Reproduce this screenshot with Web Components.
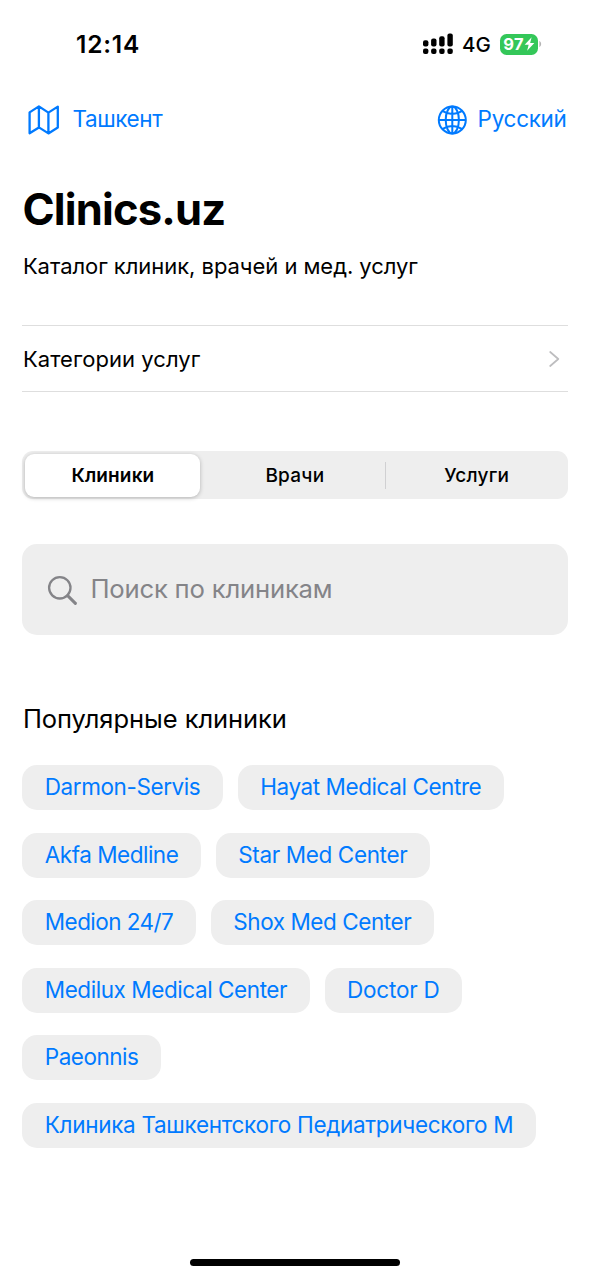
<!DOCTYPE html>
<html lang="ru">
<head>
<meta charset="utf-8">
<meta name="viewport" content="width=device-width, initial-scale=1">
<title>Clinics.uz</title>
<style>
html, body { margin: 0; padding: 0; background: #fff; }
body { font-family: Inter, "Noto Sans", sans-serif; color: #000; --blue: #007aff; --fill: #eeeeee; }
</style>
</head>
<body>
<clinics-app></clinics-app>
<script>
const define = (name, html, ready) => {
  const template = document.createElement('template');
  template.innerHTML = html;
  customElements.define(name, class extends HTMLElement {
    connectedCallback() {
      if (this.shadowRoot) return;
      this.attachShadow({ mode: 'open' }).append(template.content.cloneNode(true));
      if (ready) ready(this);
    }
  });
};

/* One line of text, tracked so that its advance equals the "fit" attribute. */
define('fit-text', `<style>
:host { display: block; white-space: nowrap; flex: none; }
span { display: inline-block; vertical-align: top; }
</style><span><slot></slot></span>`, el => {
  const span = el.shadowRoot.querySelector('span');
  const target = parseFloat(el.getAttribute('fit'));
  const count = [...el.textContent].length;
  const gap = (target - span.getBoundingClientRect().width) / count;
  span.style.letterSpacing = gap.toFixed(4) + 'px';
  el.style.width = target + 'px';
});

define('status-bar', `<style>
:host { display: flex; justify-content: space-between; align-items: center; height: 88px; padding: 0 48px 0 76px; box-sizing: border-box; }
.time { font-size: 24.5px; font-weight: 600; }
.right { display: flex; align-items: center; }
.net { font-size: 20.5px; font-weight: 500; margin: 0 9px 0 8px; }
.battery { display: flex; align-items: center; justify-content: center; gap: 0; width: 38px; height: 21px; border-radius: 6.5px; background: #34c759; color: #fff; }
.battery fit-text { font-size: 16.5px; font-weight: 700; line-height: 21px; }
.cap { margin-left: 1px; }
svg { display: block; flex: none; }
</style>
<fit-text class="time" fit="64">12:14</fit-text>
<div class="right">
<svg width="31" height="22" viewBox="0 0 31 22"><rect x="0" y="7.2" width="5.4" height="6.2" rx="2"/><rect x="8.1" y="5.4" width="5.4" height="8" rx="2"/><rect x="16.2" y="3.2" width="5.4" height="10.2" rx="2"/><rect x="24.4" y=".4" width="5.4" height="13" rx="2"/><rect x="0" y="15.6" width="5.4" height="5.3" rx="2"/><rect x="8.1" y="15.6" width="5.4" height="5.3" rx="2"/><rect x="16.2" y="15.6" width="5.4" height="5.3" rx="2"/><rect x="24.4" y="15.6" width="5.4" height="5.3" rx="2"/></svg>
<fit-text class="net" fit="29">4G</fit-text>
<div class="battery"><fit-text fit="20.5">97</fit-text><svg width="11" height="14" viewBox="0 0 10 13"><path d="M7 .3.5 7.3h3.7L2.8 12.7 9.5 5.6H5.6Z" fill="#fff"/></svg></div>
<svg class="cap" width="3" height="8" viewBox="0 0 3 8"><path d="M.4.8Q2.2 2 2.2 4T.4 7.2Z" fill="#b4b4b4"/></svg>
</div>`);

define('top-link', `<style>
:host { display: flex; align-items: center; color: var(--blue); font-size: 22.5px; line-height: 32px; }
</style><slot></slot>`);

define('map-icon', `<style>:host { display: block; width: 32px; height: 32px; margin: 2px 12px 0 1px; } svg { display: block; }</style>
<svg width="32" height="32" viewBox="0 0 32 32" fill="none" stroke="#007aff" stroke-width="2.3" stroke-linejoin="round"><path d="M1.6 8.4 10.9 2.4 20.4 8.6 29.8 2.6V23.6L20.4 29.4 10.9 23.4 1.6 29.2ZM10.9 2.4v21M20.4 8.6v20.8"/></svg>`);

define('globe-icon', `<style>:host { display: block; width: 32px; height: 32px; margin: 2px 10px 0 0; } svg { display: block; }</style>
<svg width="32" height="32" viewBox="0 0 32 32" fill="none" stroke="#007aff" stroke-width="2"><circle cx="16.3" cy="16" r="13.5"/><ellipse cx="16.3" cy="16" rx="6.6" ry="13.5"/><path d="M16.3 2.4v27.2M2.7 16h27.2M6.3 6.8Q16.3 13.2 26.3 6.8M6.3 25.2Q16.3 18.8 26.3 25.2"/></svg>`);

define('page-heading', `<style>
:host { display: block; }
.title { font-size: 43.5px; font-weight: 700; line-height: 56px; }
.sub { font-size: 22px; line-height: 32px; margin: 13px 0 0 .5px; }
</style>
<fit-text class="title" fit="203">Clinics.uz</fit-text>
<fit-text class="sub" fit="395">Каталог клиник, врачей и мед. услуг</fit-text>`);

define('list-row', `<style>
:host { display: flex; align-items: center; justify-content: space-between; height: 67px; box-sizing: border-box; border: solid #dedede; border-width: 1px 0; padding: 0 8px 0 .5px; font-size: 22px; line-height: 32px; }
svg { display: block; }
</style><slot></slot>
<svg width="11" height="16" viewBox="0 0 11 16" fill="none" stroke="#bdbdbf" stroke-width="1.7" stroke-linecap="round" stroke-linejoin="round"><path d="M1.2 1 9.3 8 1.2 15"/></svg>`);

define('segment-control', `<style>
:host { display: grid; grid-template-columns: 178px 184px 1fr; height: 48px; box-sizing: border-box; padding: 3px 0 2px; border-radius: 11px; background: var(--fill); font-size: 19px; font-weight: 500; line-height: 43px; }
div { display: flex; justify-content: center; align-items: center; box-sizing: border-box; }
fit-text { padding-top: 1px; line-height: 42px; }
.on { margin-left: 3px; border-radius: 9px; background: #fff; box-shadow: 0 1px 4px rgba(0,0,0,.25); font-weight: 600; }
.mid { padding-left: 5px; }
.rule { width: 1px; height: 27px; margin-left: .6px; background: #d0d0d2; flex: none; }
.grow { flex: 1; }
</style>
<div class="on"><fit-text fit="83">Клиники</fit-text></div>
<div class="mid"><div class="grow"><fit-text fit="59">Врачи</fit-text></div></div>
<div class="last"><span class="rule"></span><div class="grow"><fit-text fit="65">Услуги</fit-text></div></div>`);

define('search-field', `<style>
:host { display: flex; align-items: center; height: 90.5px; box-sizing: border-box; padding-left: 25px; gap: 12px; border-radius: 15px; background: var(--fill); color: #848488; font-size: 25.7px; line-height: 36px; }
svg { display: block; margin-top: 3px; }
</style>
<svg width="31" height="31" viewBox="0 0 31 31" fill="none" stroke="#848488" stroke-linecap="round"><circle cx="12.8" cy="12.8" r="10.7" stroke-width="2.3"/><path d="m20.6 20.6 7.8 7.8" stroke-width="3"/></svg><slot></slot>`);

define('clinic-chip', `<style>
:host { display: block; height: 45px; box-sizing: border-box; padding: 0 22.6px 0 22.4px; border-radius: 15px; background: var(--fill); color: var(--blue); font-size: 22.5px; line-height: 43px; }
</style><slot></slot>`);

define('chip-list', `<style>
:host { display: flex; flex-wrap: wrap; gap: 22.5px 15px; }
</style><slot></slot>`);

define('home-indicator', `<style>
:host { display: block; width: 210px; height: 7.5px; margin: auto auto 12px; border-radius: 4px; background: #000; }
</style>`);

define('clinics-app', `<style>
:host { display: flex; flex-direction: column; width: 590px; height: 1278px; overflow: hidden; background: #fff; }
main { display: block; padding: 15px 22.4px 0; }
nav { display: flex; justify-content: space-between; height: 32px; padding: 0 1px 0 5px; }
top-link { height: 32px; }
page-heading { margin-top: 46px; }
list-row { margin-top: 43px; }
segment-control { margin-top: 59px; }
search-field { margin-top: 45px; }
.popular { font-size: 25.5px; line-height: 36px; margin: 66.5px 0 0 .5px; }
chip-list { margin-top: 28.3px; }
</style>
<status-bar></status-bar>
<main>
<nav>
<top-link><map-icon></map-icon><fit-text fit="90">Ташкент</fit-text></top-link>
<top-link><globe-icon></globe-icon><fit-text fit="89">Русский</fit-text></top-link>
</nav>
<page-heading></page-heading>
<list-row><fit-text fit="177.5">Категории услуг</fit-text></list-row>
<segment-control></segment-control>
<search-field><fit-text fit="242">Поиск по клиникам</fit-text></search-field>
<fit-text class="popular" fit="264">Популярные клиники</fit-text>
<chip-list>
<clinic-chip><fit-text fit="155.5">Darmon-Servis</fit-text></clinic-chip>
<clinic-chip><fit-text fit="221">Hayat Medical Centre</fit-text></clinic-chip>
<clinic-chip><fit-text fit="133.5">Akfa Medline</fit-text></clinic-chip>
<clinic-chip><fit-text fit="169">Star Med Center</fit-text></clinic-chip>
<clinic-chip><fit-text fit="128.5">Medion 24/7</fit-text></clinic-chip>
<clinic-chip><fit-text fit="178">Shox Med Center</fit-text></clinic-chip>
<clinic-chip><fit-text fit="242.3">Medilux Medical Center</fit-text></clinic-chip>
<clinic-chip><fit-text fit="92.5">Doctor D</fit-text></clinic-chip>
<clinic-chip><fit-text fit="93.5">Paeonnis</fit-text></clinic-chip>
<clinic-chip><fit-text fit="468.5">Клиника Ташкентского Педиатрического М</fit-text></clinic-chip>
</chip-list>
</main>
<home-indicator></home-indicator>`);
</script>
</body>
</html>
